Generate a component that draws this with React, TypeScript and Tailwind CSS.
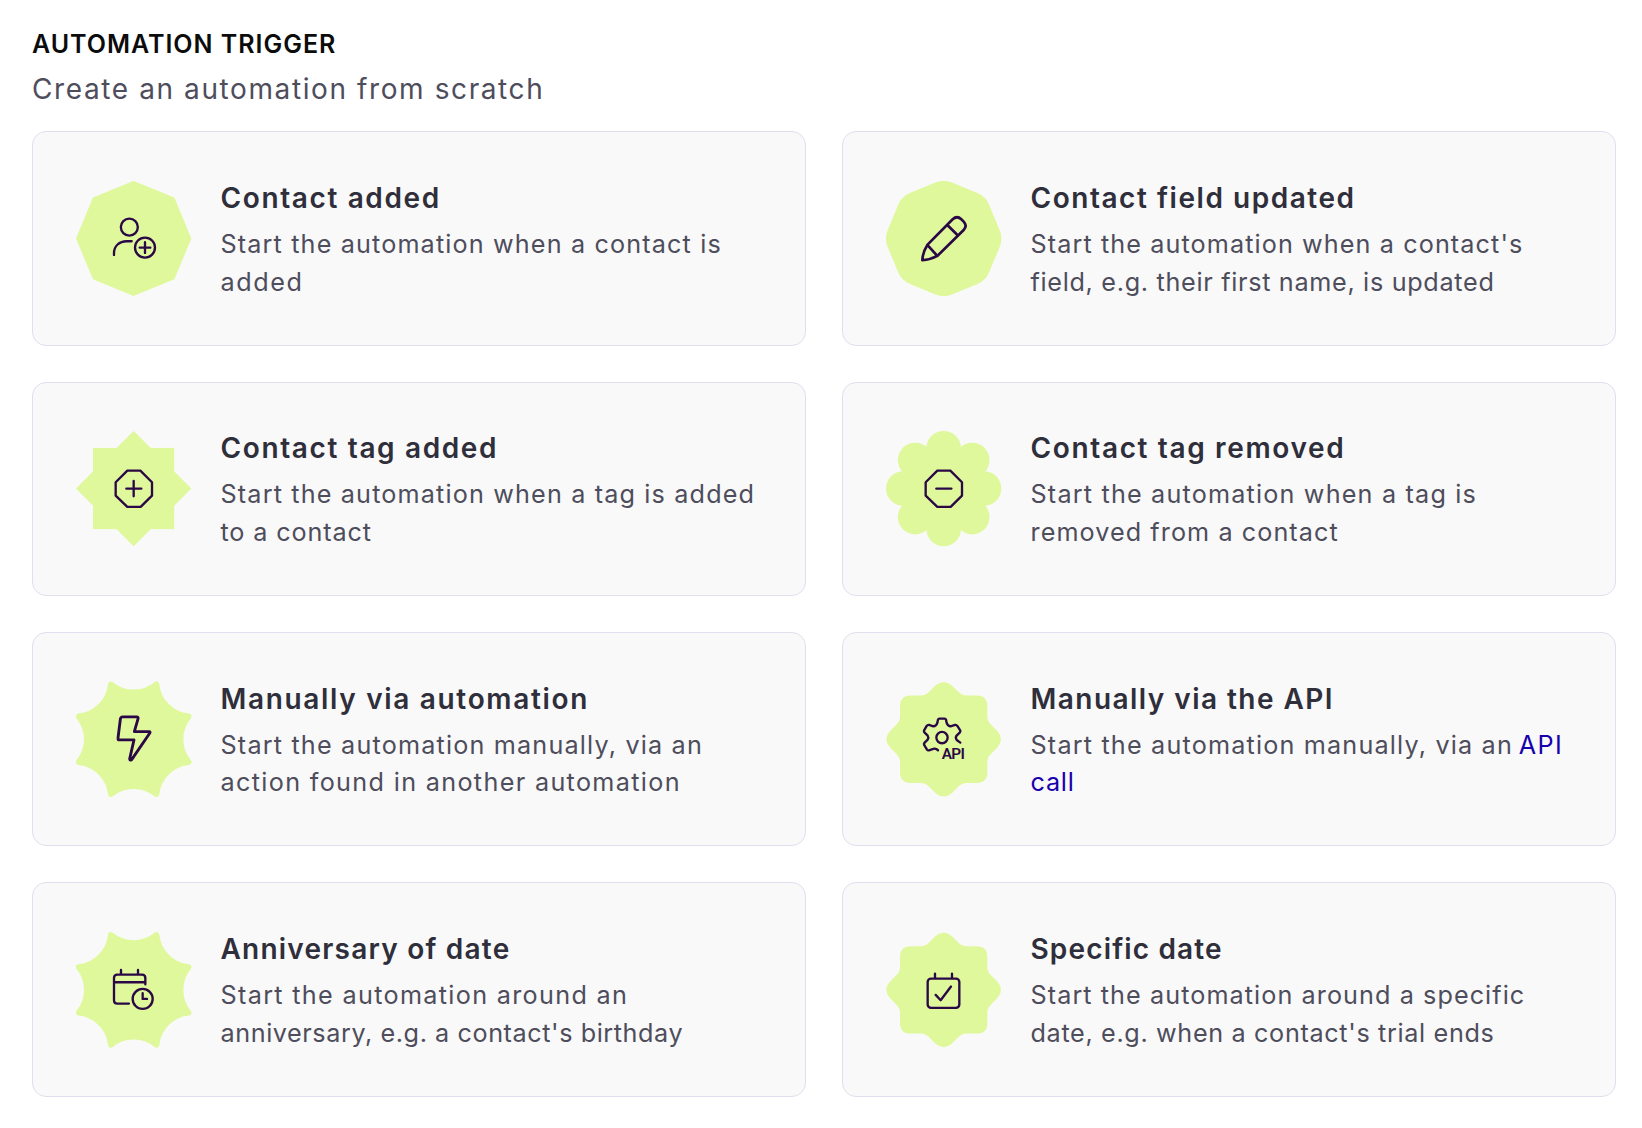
import type { ReactNode } from "react";

const octagonBadge = (
  <polygon points="208.500,33 331,83 382,206 331,328 208.500,378.500 87,328 36,206 87,83" />
);

const softOctagonBadge = (
  <polygon
    points="209,98 285.400,129.600 317,206 285.400,282.400 209,314 132.600,282.400 101,206 132.600,129.600"
    stroke="#e0f89c"
    strokeWidth="130"
    strokeLinejoin="round"
  />
);

const starBadge = (
  <>
    <rect x="87" y="84" width="243.500" height="243.500" />
    <polygon points="209,33 382,206 209,379 36,206" />
  </>
);

const flowerBadge = (
  <>
    <circle cx="209" cy="206" r="112" />
    <circle cx="209" cy="85" r="52" />
    <circle cx="294.500" cy="120.500" r="52" />
    <circle cx="330" cy="206" r="52" />
    <circle cx="294.500" cy="291.500" r="52" />
    <circle cx="209" cy="327" r="52" />
    <circle cx="123.500" cy="291.500" r="52" />
    <circle cx="88" cy="206" r="52" />
    <circle cx="123.500" cy="120.500" r="52" />
  </>
);

const burstBadge = (
  <path
    d="M140.900 44.700A108 108 0 0 0 277.100 44.700A108 108 0 0 0 373.300 140.900A108 108 0 0 0 373.300 277.100A108 108 0 0 0 277.100 373.300A108 108 0 0 0 140.900 373.300A108 108 0 0 0 44.700 277.100A108 108 0 0 0 44.700 140.900A108 108 0 0 0 140.900 44.700Z"
    stroke="#e0f89c"
    strokeWidth="18"
    strokeLinejoin="round"
  />
);

const waveBadge = (
  <path d="M110 78H140Q155 78 166 66L184 48Q209 26 234 48L252 66Q263 78 278 78H308Q340 78 340 110V140Q340 155 352 166L370 184Q392 209 370 234L352 252Q340 263 340 278V308Q340 340 308 340H278Q263 340 252 352L234 370Q209 392 184 370L166 352Q155 340 140 340H110Q78 340 78 308V278Q78 263 66 252L48 234Q26 209 48 184L66 166Q78 155 78 140V110Q78 78 110 78Z" />
);

const userPlusIcon = (
  <>
    <circle cx="196" cy="171.500" r="25.500" />
    <path d="M150 255V250C150 228 166 214 188 214H203" />
    <circle cx="243" cy="233" r="30" />
    <path d="M227 233H259M243 217V249" />
  </>
);

const pencilIcon = (
  <path
    d="M160 225L236 148Q249 136 262 148L269 155Q281 168 269 180L190 258Q170 269 145 271Q146 247 160 225L190 258M220 165L251 196"
    strokeWidth="8"
  />
);

const octagonOutline = (
  <polygon points="190,152 229,152 264,187 264,227 230,261 190,261 155,227 155,187" />
);

const tagPlusIcon = (
  <>
    {octagonOutline}
    <path d="M187 206H232M209 183V229" />
  </>
);

const tagMinusIcon = (
  <>
    {octagonOutline}
    <path d="M187 206H232" />
  </>
);

const boltIcon = (
  <path
    d="M176 142H218Q224 142 222 148L211 186H256Q260 187 257 191L203 270Q198 274 197 268L210 211H166Q161 211 162 206L169 149Q170 142 176 142Z"
    strokeWidth="8.500"
  />
);

const gearApiIcon = (
  <>
    <circle cx="204" cy="204" r="17" />
    <path d="M192 242L188 239Q183 236 178 238L165 242Q161 243 159 240L150 225Q149 222 152 219L161 210Q165 204 161 198L152 189Q149 186 150 183L158 169Q161 165 165 166L178 170Q187 170 190 160L192 150Q193 147 196 147H212Q215 147 216 150L218 160Q221 170 230 170L243 166Q247 165 250 169L259 183Q260 186 257 189L248 198Q243 204 248 211L259 219" />
    <text
      x="203"
      y="268"
      fontFamily="Roboto, sans-serif"
      fontSize="46"
      fontWeight="600"
      textLength="70"
      fill="#2a0845"
      stroke="none"
    >
      API
    </text>
  </>
);

const calendarClockIcon = (
  <>
    <path d="M195 250H160Q150 250 150 240V173Q150 163 160 163H234Q244 163 244 173V192M150 186H244M171 149V161M222 149V161" />
    <circle cx="236" cy="236" r="30" />
    <path d="M236 219V236H249" />
  </>
);

const calendarCheckIcon = (
  <>
    <rect x="161" y="175" width="95" height="88" rx="10" />
    <path d="M183 160V173M234 160V173M185 224L200 240L231 199" />
  </>
);

type Line = { text: string; tracking: string; link?: string };

type Trigger = {
  title: string;
  titleTracking: string;
  lines: Line[];
  badge: ReactNode;
  icon: ReactNode;
};

const triggers: Trigger[] = [
  {
    title: "Contact added",
    titleTracking: "tracking-[1.626px]",
    lines: [
      { text: "Start the automation when a contact is", tracking: "tracking-[1.143px]" },
      { text: "added", tracking: "tracking-[1.582px]" },
    ],
    badge: octagonBadge,
    icon: userPlusIcon,
  },
  {
    title: "Contact field updated",
    titleTracking: "tracking-[1.538px]",
    lines: [
      { text: "Start the automation when a contact's", tracking: "tracking-[1.1px]" },
      { text: "field, e.g. their first name, is updated", tracking: "tracking-[0.693px]" },
    ],
    badge: softOctagonBadge,
    icon: pencilIcon,
  },
  {
    title: "Contact tag added",
    titleTracking: "tracking-[1.634px]",
    lines: [
      { text: "Start the automation when a tag is added", tracking: "tracking-[1.154px]" },
      { text: "to a contact", tracking: "tracking-[0.866px]" },
    ],
    badge: starBadge,
    icon: tagPlusIcon,
  },
  {
    title: "Contact tag removed",
    titleTracking: "tracking-[1.647px]",
    lines: [
      { text: "Start the automation when a tag is", tracking: "tracking-[1.183px]" },
      { text: "removed from a contact", tracking: "tracking-[1.074px]" },
    ],
    badge: flowerBadge,
    icon: tagMinusIcon,
  },
  {
    title: "Manually via automation",
    titleTracking: "tracking-[1.671px]",
    lines: [
      { text: "Start the automation manually, via an", tracking: "tracking-[1.179px]" },
      { text: "action found in another automation", tracking: "tracking-[1.33px]" },
    ],
    badge: burstBadge,
    icon: boltIcon,
  },
  {
    title: "Manually via the API",
    titleTracking: "tracking-[1.454px]",
    lines: [
      { text: "Start the automation manually, via an ", link: "API", tracking: "tracking-[1.179px]" },
      { text: "", link: "call", tracking: "tracking-[0.797px]" },
    ],
    badge: waveBadge,
    icon: gearApiIcon,
  },
  {
    title: "Anniversary of date",
    titleTracking: "tracking-[1.217px]",
    lines: [
      { text: "Start the automation around an", tracking: "tracking-[1.32px]" },
      { text: "anniversary, e.g. a contact's birthday", tracking: "tracking-[0.575px]" },
    ],
    badge: burstBadge,
    icon: calendarClockIcon,
  },
  {
    title: "Specific date",
    titleTracking: "tracking-[1.15px]",
    lines: [
      { text: "Start the automation around a specific", tracking: "tracking-[1.073px]" },
      { text: "date, e.g. when a contact's trial ends", tracking: "tracking-[0.66px]" },
    ],
    badge: waveBadge,
    icon: calendarCheckIcon,
  },
];

const viewBoxes = ["36 33.2 348 348", "36 33.2 348 348", "36 34.2 348 348", "36 35.3 348 348"];

function TriggerCard({ trigger, row }: { trigger: Trigger; row: number }) {
  return (
    <article className="flex items-center gap-[28.500px] rounded-[14px] border border-[#e0dfee] bg-[#f9f9f9] pl-[43px]">
      <svg viewBox={viewBoxes[row]} className="size-[116px] shrink-0" aria-hidden="true">
        <g fill="#e0f89c">{trigger.badge}</g>
        <g
          fill="none"
          stroke="#2a0845"
          strokeWidth="7"
          strokeLinecap="round"
          strokeLinejoin="round"
        >
          {trigger.icon}
        </g>
      </svg>
      <div className="pt-px whitespace-nowrap">
        <h2 className={`text-[28px] leading-[42px] font-semibold text-[#2f2e3b] ${trigger.titleTracking}`}>
          {trigger.title}
        </h2>
        <p className="mt-[7px] text-[25.2px] leading-[37.7px] text-[#4e4d5c]">
          {trigger.lines.map((line, i) => (
            <span key={i} className={`block ${line.tracking}`}>
              {line.text}
              {line.link && (
                <a
                  href="#"
                  className={
                    line.link === "API"
                      ? "-ml-[2.5px] tracking-[1.4px] text-[#1800ad]"
                      : "text-[#1800ad]"
                  }
                >
                  {line.link}
                </a>
              )}
            </span>
          ))}
        </p>
      </div>
    </article>
  );
}

export default function App() {
  return (
    <main className="min-h-screen bg-white px-8 pt-[25px] font-['Inter',sans-serif]">
      <h1 className="text-[25px] leading-[38px] font-semibold tracking-[0.98px] text-[#0c0c0d]">
        AUTOMATION TRIGGER
      </h1>
      <p className="mt-[5px] text-[28px] leading-[42px] tracking-[1.6px] text-[#4e4d5c]">
        Create an automation from scratch
      </p>
      <section className="mt-[21.400px] grid auto-rows-[214.300px] grid-cols-[774px_774px] gap-x-9 gap-y-[36.050px]">
        {triggers.map((trigger, i) => (
          <TriggerCard key={trigger.title} trigger={trigger} row={Math.floor(i / 2)} />
        ))}
      </section>
    </main>
  );
}
